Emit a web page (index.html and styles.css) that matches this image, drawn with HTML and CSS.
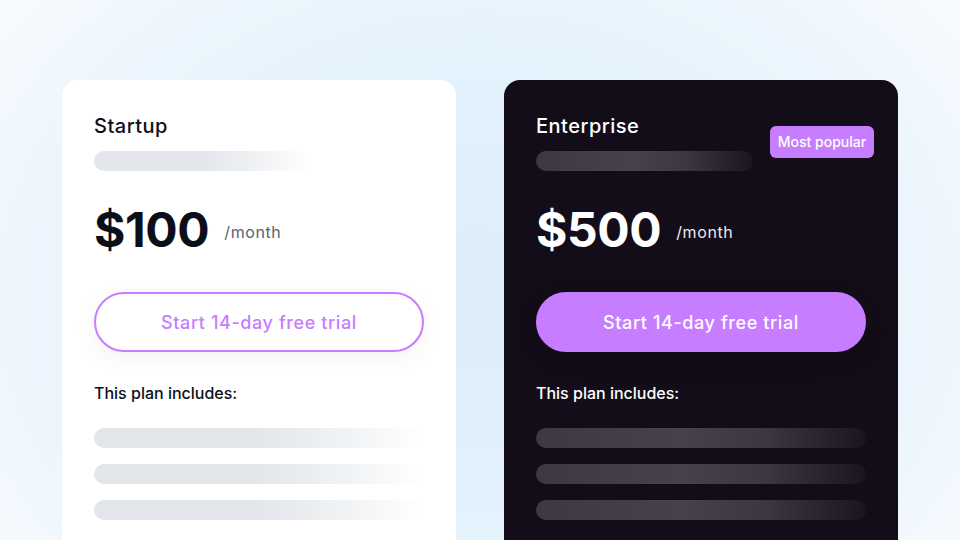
FILE: index.html
```html
<!DOCTYPE html>
<html lang="en">
<head>
<meta charset="utf-8">
<title>Pricing</title>
<link rel="stylesheet" href="styles.css">
</head>
<body>
<main class="page">
  <section class="card card-light">
    <div class="head">
      <div class="head-main">
        <h2 class="plan">Startup</h2>
        <div class="bar bar-short"></div>
      </div>
    </div>
    <div class="price-row">
      <span class="price">$100</span>
      <span class="per">/month</span>
    </div>
    <button class="cta">Start 14-day free trial</button>
    <p class="includes">This plan includes:</p>
    <div class="lines">
      <div class="bar"></div>
      <div class="bar"></div>
      <div class="bar"></div>
    </div>
  </section>
  <section class="card card-dark">
    <div class="head">
      <div class="head-main">
        <h2 class="plan">Enterprise</h2>
        <div class="bar bar-short"></div>
      </div>
      <span class="badge">Most popular</span>
    </div>
    <div class="price-row">
      <span class="price">$500</span>
      <span class="per">/month</span>
    </div>
    <button class="cta">Start 14-day free trial</button>
    <p class="includes">This plan includes:</p>
    <div class="lines">
      <div class="bar"></div>
      <div class="bar"></div>
      <div class="bar"></div>
    </div>
  </section>
</main>
</body>
</html>
```

FILE: styles.css
```css
* { box-sizing: border-box; }
html, body { margin: 0; padding: 0; }
body {
  width: 960px;
  height: 540px;
  overflow: hidden;
  font-family: Inter, "Noto Sans", sans-serif;
  background:
    radial-gradient(ellipse 72% 100% at 50% 55%, #dcedf9 0%, #e3f2fc 40%, #edf6fd 66%, #f8fbfe 88%, #ffffff 100%);
}
.page {
  display: flex;
  justify-content: center;
  gap: 48px;
  padding-top: 80px;
  height: 540px;
  overflow: hidden;
}
.card {
  width: 394px;
  height: 460px;
  border-radius: 16px 16px 0 0;
  padding: 32px 32px 0;
  display: flex;
  flex-direction: column;
}
.card-light { background: #ffffff; color: #0b0f19; }
.card-dark { background: #130d19; color: #ffffff; }

.head {
  display: flex;
  align-items: center;
  justify-content: space-between;
}
.head-main { display: flex; flex-direction: column; }
.plan {
  margin: 0 0 11px;
  font-size: 20px;
  line-height: 28px;
  font-weight: 500;
  letter-spacing: 0.5px;
}
.bar {
  height: 20px;
  border-radius: 10px;
  flex: none;
}
.card-light .bar {
  background: linear-gradient(90deg, #e2e6ea 0%, #e3e7eb 50%, rgba(238,241,244,0.75) 80%, rgba(255,255,255,0) 100%);
}
.card-dark .bar {
  background: linear-gradient(90deg, #3d3843 0%, #46414b 45%, #3b3641 70%, #1b1521 100%);
}
.bar-short { width: 217px; }

.badge {
  margin-right: -8px;
  width: 104px;
  height: 32px;
  border-radius: 6px;
  background: #c77dff;
  color: #ffffff;
  font-size: 14px;
  font-weight: 500;
  display: flex;
  align-items: center;
  justify-content: center;
}

.price-row {
  display: flex;
  align-items: center;
  gap: 15px;
  margin-top: 31px;
}
.price {
  font-size: 48px;
  line-height: 56px;
  font-weight: 650;
  letter-spacing: -0.4px;
}
.per {
  font-size: 16px;
  line-height: 24px;
  padding-top: 4px;
  letter-spacing: 0.6px;
}
.card-light .per { color: #5b636e; }
.card-dark .per { color: #ece9ef; }

.cta {
  margin-top: 34px;
  height: 60px;
  width: 100%;
  flex: none;
  border-radius: 30px;
  font-family: inherit;
  font-size: 18px;
  font-weight: 500;
  letter-spacing: 0.6px;
  cursor: pointer;
}
.card-light .cta {
  background: #ffffff;
  border: 2px solid #c77dff;
  color: #c77dff;
  box-shadow: 0 6px 24px rgba(20, 20, 40, 0.05);
}
.card-dark .cta {
  background: #c77dff;
  border: 2px solid #c77dff;
  color: #ffffff;
  box-shadow: 0 8px 24px rgba(0, 0, 0, 0.2);
}

.includes {
  margin: 29px 0 0;
  font-size: 16px;
  line-height: 24px;
  font-weight: 500;
}

.lines {
  margin-top: 23px;
  display: flex;
  flex-direction: column;
  gap: 16px;
}
```
